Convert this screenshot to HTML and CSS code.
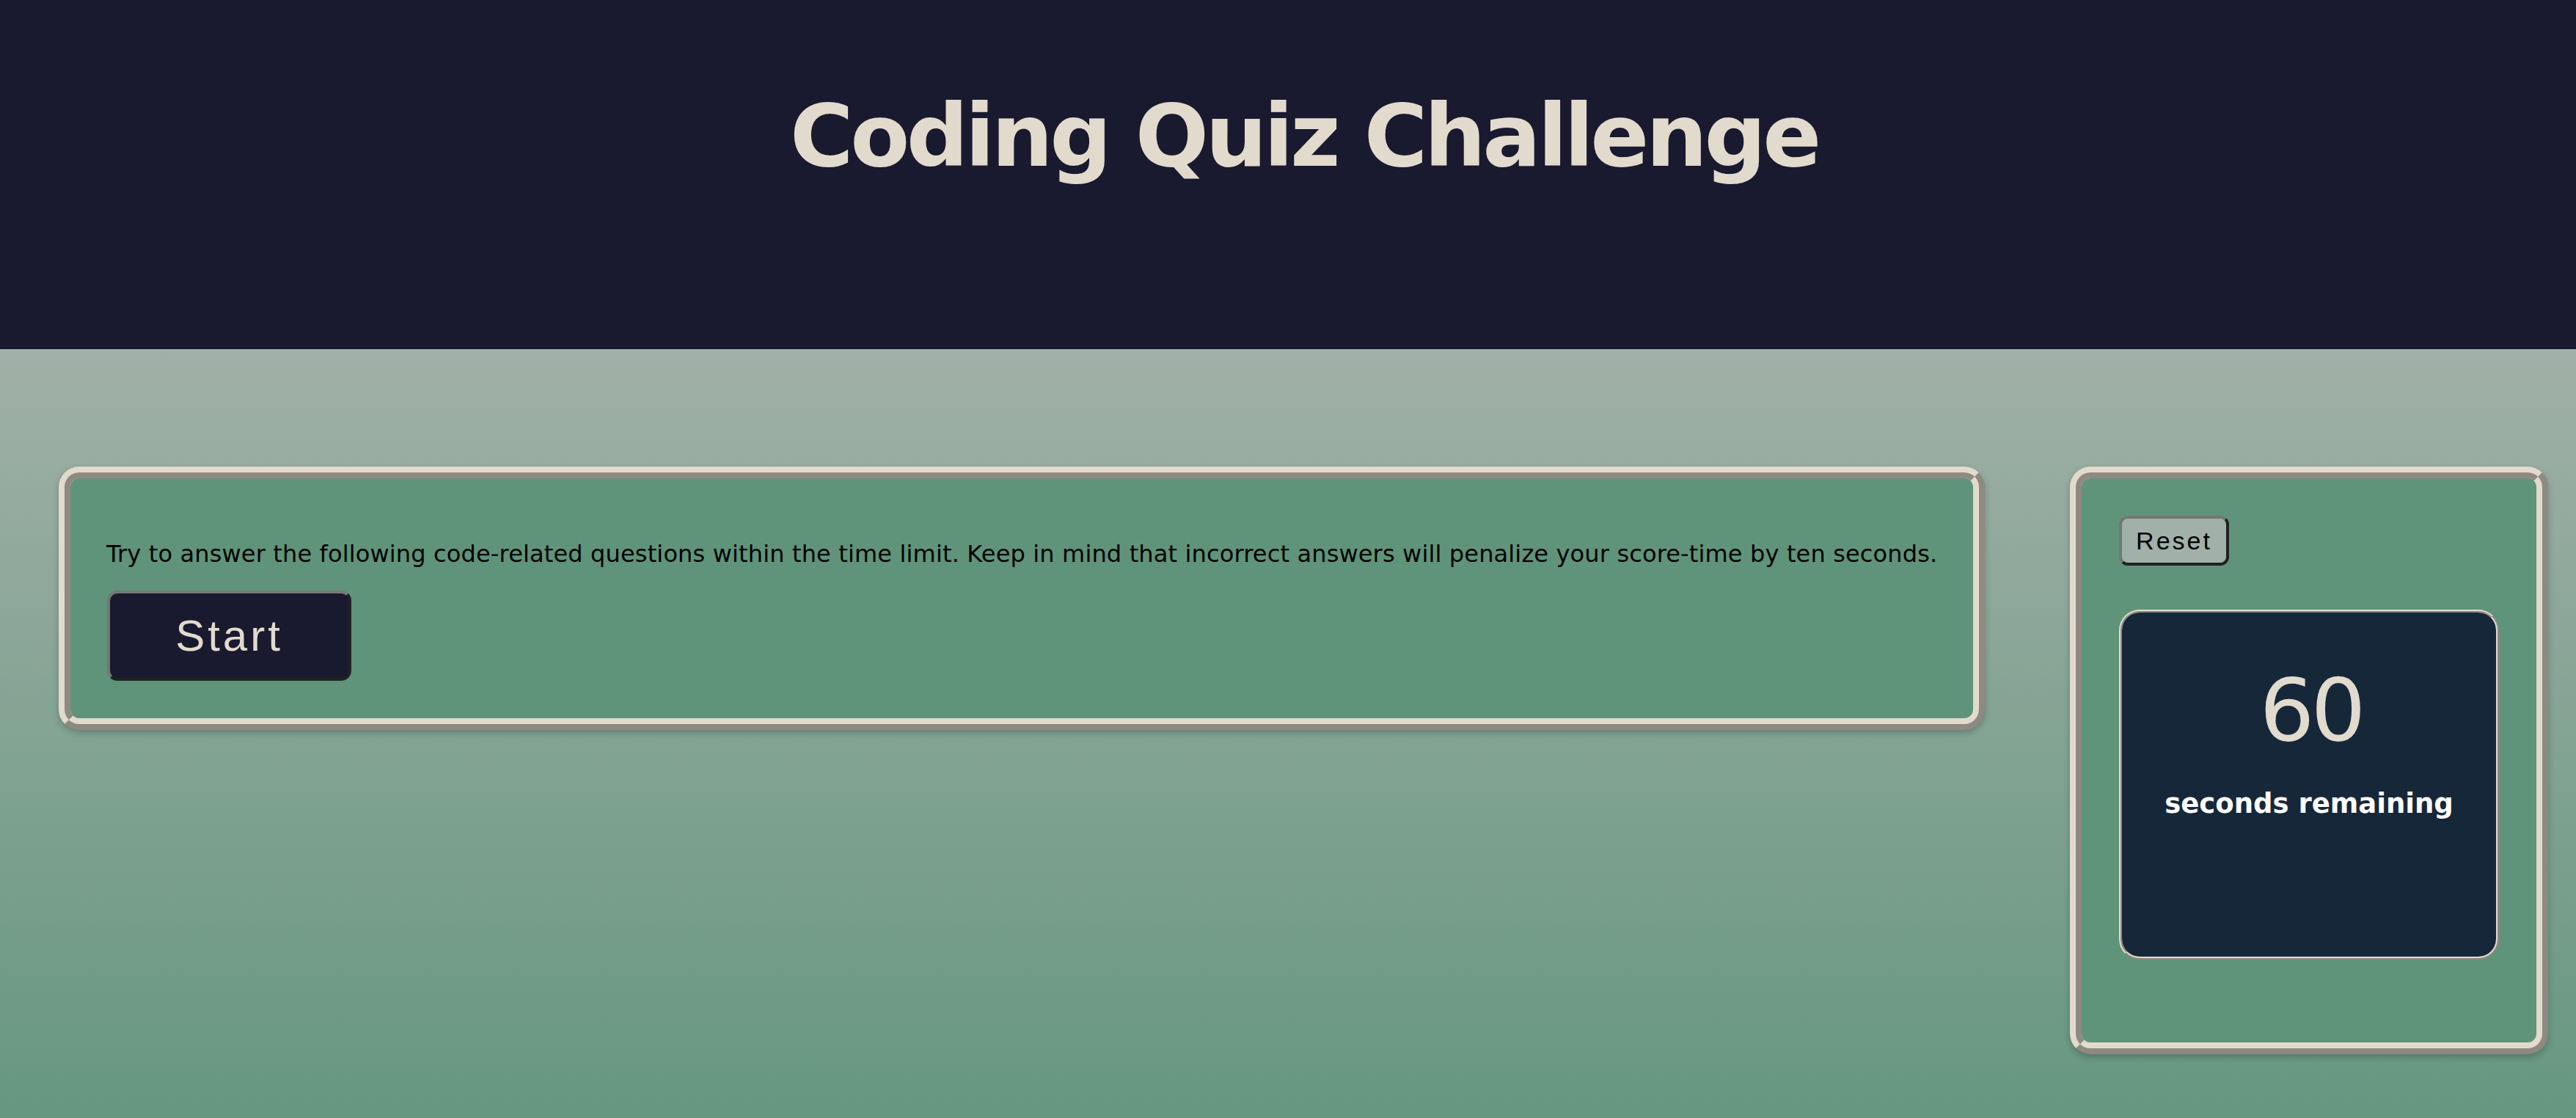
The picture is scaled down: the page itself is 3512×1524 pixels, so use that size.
FILE: index.html
```html
<!DOCTYPE html>
<html lang="en">
<head>
<meta charset="utf-8">
<title>Coding Quiz Challenge</title>
<link rel="stylesheet" href="styles.css">
</head>
<body>
<header class="site-header">
  <h1 class="title">Coding Quiz Challenge</h1>
</header>
<main class="layout">
  <section class="card card-intro">
    <p class="intro-text">Try to answer the following code-related questions within the time limit. Keep in mind that incorrect answers will penalize your score-time by ten seconds.</p>
    <button class="btn btn-start" type="button">Start</button>
  </section>
  <aside class="card card-timer">
    <button class="btn btn-reset" type="button">Reset</button>
    <div class="timer-box">
      <div class="timer-count">60</div>
      <div class="timer-label">seconds remaining</div>
    </div>
  </aside>
</main>
</body>
</html>
```
FILE: styles.css
```css
html, body {
  margin: 0;
  padding: 0;
}
body {
  font-family: "DejaVu Sans", Verdana, sans-serif;
  background: #66977f;
  min-height: 1524px;
}
.site-header {
  background: #19192f;
  height: 476px;
  box-sizing: border-box;
  padding-top: 116px;
}
.title {
  margin: 0;
  padding-left: 44px;
  text-align: center;
  font-family: "DejaVu Sans", Verdana, sans-serif;
  font-weight: bold;
  font-size: 118px;
  letter-spacing: -4.5px;
  line-height: normal;
  color: #e2dacd;
}
.layout {
  display: flex;
  align-items: flex-start;
  gap: 116px;
  padding: 160px 38px 0 80px;
  min-height: 1048px;
  box-sizing: border-box;
  background: linear-gradient(to bottom, #a1b0a8 0%, #66977f 100%);
}
.card {
  background: #5f947a;
  border: 16px ridge #e2dacd;
  border-radius: 28px;
  box-shadow: 0 4px 10px rgba(0, 0, 0, 0.22);
  box-sizing: border-box;
}
.card-intro {
  width: 2626px;
  padding: 48px 48px 51px 49px;
}
.intro-text {
  margin: 36px 0 31px;
  font-size: 32px;
  letter-spacing: 0.15px;
  white-space: nowrap;
  color: #000;
}
.btn {
  font-family: "Liberation Sans", Arial, sans-serif;
  border: 4px outset #767676;
  box-sizing: border-box;
  padding: 0;
  display: block;
}
.btn-start {
  width: 333px;
  height: 123px;
  margin-left: 1px;
  background: #19192f;
  color: #e2dacd;
  font-size: 60px;
  letter-spacing: 4px;
  border-radius: 14px;
}
.card-timer {
  width: 652px;
  height: 801px;
  padding: 51px;
}
.btn-reset {
  width: 150px;
  height: 68px;
  background: #a1b0a8;
  color: #000;
  font-size: 34px;
  letter-spacing: 3px;
  border-radius: 12px;
}
.timer-box {
  margin-top: 60px;
  height: 477px;
  box-sizing: border-box;
  background: #17273a;
  border: 4px ridge #e2dacd;
  border-radius: 28px;
  padding-top: 64px;
  text-align: center;
}
.timer-count {
  font-size: 118px;
  letter-spacing: -5px;
  padding-left: 5px;
  color: #e2dacd;
  line-height: normal;
}
.timer-label {
  margin-top: 37px;
  font-size: 37px;
  font-weight: bold;
  color: #fff;
  line-height: normal;
}
```
